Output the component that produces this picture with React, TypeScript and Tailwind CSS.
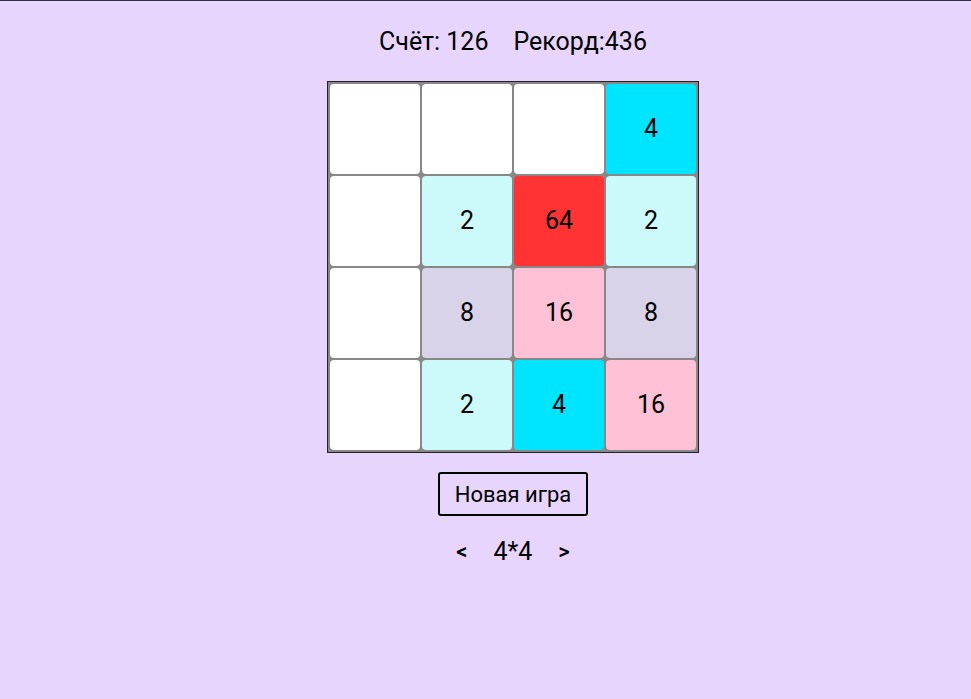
import React from 'react';

const BOARD: number[][] = [
  [0, 0, 0, 4],
  [0, 2, 64, 2],
  [0, 8, 16, 8],
  [0, 2, 4, 16],
];

const tileBg: Record<number, string> = {
  0: 'bg-white',
  2: 'bg-[#ccf9f9]',
  4: 'bg-[#00e5ff]',
  8: 'bg-[#d8d3e9]',
  16: 'bg-[#ffc1d5]',
  64: 'bg-[#ff3333]',
};

export default function App() {
  return (
    <div
      className="min-h-[699px] w-full bg-[#e8d5fe] border-t border-[#2d3340] pl-[55px] flex flex-col items-center"
      style={{ fontFamily: 'Roboto, "Noto Sans", sans-serif' }}
    >
      <div className="mt-[25px] flex gap-[25px] text-[25px] leading-[32px] text-black">
        <span>Счёт: 126</span>
        <span>Рекорд:436</span>
      </div>
      <div className="mt-[23px] border border-[#222] bg-[#888] p-[2px] grid grid-cols-4 gap-[2px]">
        {BOARD.flat().map((v, i) => (
          <div
            key={i}
            className={`w-[90px] h-[90px] rounded-[4px] flex items-center justify-center text-[25px] text-black ${tileBg[v]}`}
          >
            {v !== 0 ? v : ''}
          </div>
        ))}
      </div>
      <button className="mt-[19px] w-[150px] h-[44px] border-2 border-black rounded-[3px] text-[22px] text-black">
        Новая игра
      </button>
      <div className="mt-[17px] flex items-center text-[25px] text-black">
        <span className="text-[22px] font-medium">&lt;</span>
        <span className="mx-[26px]">4*4</span>
        <span className="text-[22px] font-medium">&gt;</span>
      </div>
    </div>
  );
}
